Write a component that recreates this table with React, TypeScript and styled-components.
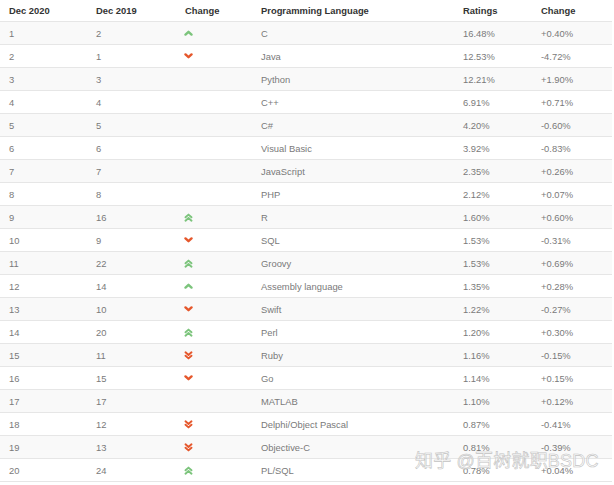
import React from 'react';
import styled, { createGlobalStyle } from 'styled-components';

type Trend = 'up' | 'up2' | 'down' | 'down2' | 'none';

interface Row {
  now: number;
  prev: number;
  trend: Trend;
  lang: string;
  rating: string;
  change: string;
}

const rows: Row[] = [
  { now: 1, prev: 2, trend: 'up', lang: 'C', rating: '16.48%', change: '+0.40%' },
  { now: 2, prev: 1, trend: 'down', lang: 'Java', rating: '12.53%', change: '-4.72%' },
  { now: 3, prev: 3, trend: 'none', lang: 'Python', rating: '12.21%', change: '+1.90%' },
  { now: 4, prev: 4, trend: 'none', lang: 'C++', rating: '6.91%', change: '+0.71%' },
  { now: 5, prev: 5, trend: 'none', lang: 'C#', rating: '4.20%', change: '-0.60%' },
  { now: 6, prev: 6, trend: 'none', lang: 'Visual Basic', rating: '3.92%', change: '-0.83%' },
  { now: 7, prev: 7, trend: 'none', lang: 'JavaScript', rating: '2.35%', change: '+0.26%' },
  { now: 8, prev: 8, trend: 'none', lang: 'PHP', rating: '2.12%', change: '+0.07%' },
  { now: 9, prev: 16, trend: 'up2', lang: 'R', rating: '1.60%', change: '+0.60%' },
  { now: 10, prev: 9, trend: 'down', lang: 'SQL', rating: '1.53%', change: '-0.31%' },
  { now: 11, prev: 22, trend: 'up2', lang: 'Groovy', rating: '1.53%', change: '+0.69%' },
  { now: 12, prev: 14, trend: 'up', lang: 'Assembly language', rating: '1.35%', change: '+0.28%' },
  { now: 13, prev: 10, trend: 'down', lang: 'Swift', rating: '1.22%', change: '-0.27%' },
  { now: 14, prev: 20, trend: 'up2', lang: 'Perl', rating: '1.20%', change: '+0.30%' },
  { now: 15, prev: 11, trend: 'down2', lang: 'Ruby', rating: '1.16%', change: '-0.15%' },
  { now: 16, prev: 15, trend: 'down', lang: 'Go', rating: '1.14%', change: '+0.15%' },
  { now: 17, prev: 17, trend: 'none', lang: 'MATLAB', rating: '1.10%', change: '+0.12%' },
  { now: 18, prev: 12, trend: 'down2', lang: 'Delphi/Object Pascal', rating: '0.87%', change: '-0.41%' },
  { now: 19, prev: 13, trend: 'down2', lang: 'Objective-C', rating: '0.81%', change: '-0.39%' },
  { now: 20, prev: 24, trend: 'up2', lang: 'PL/SQL', rating: '0.78%', change: '+0.04%' },
];

const GlobalStyle = createGlobalStyle`
  html, body {
    margin: 0;
    padding: 0;
    background: #fff;
  }
  body {
    font-family: "Liberation Sans", Arial, sans-serif;
  }
`;

const Page = styled.div`
  position: relative;
  width: 614px;
  height: 485px;
  overflow: hidden;
  background: #fff;
`;

const Table = styled.div`
  width: 612px;
`;

const RowGrid = styled.div<{ $striped?: boolean; $head?: boolean }>`
  display: grid;
  grid-template-columns: 87px 89px 76px 202px 78px 80px;
  align-items: center;
  height: ${(p) => (p.$head ? '21px' : '22px')};
  background: ${(p) => (p.$striped ? '#f9f9f9' : '#fff')};
  border-bottom: 1px solid #e6e6e6;
`;

const Cell = styled.div<{ $head?: boolean }>`
  padding-left: 9px;
  font-size: 9.4px;
  white-space: nowrap;
  color: ${(p) => (p.$head ? '#333' : '#7a7a7a')};
  font-weight: ${(p) => (p.$head ? 700 : 400)};
`;

const IconCell = styled.div`
  display: flex;
  align-items: center;
  padding-left: 8px;
`;

const Watermark = styled.div`
  position: absolute;
  left: 415px;
  top: 446px;
  font-family: "Liberation Sans", "Noto Sans CJK SC", sans-serif;
  font-size: 18px;
  color: rgba(255, 255, 255, 0.6);
  -webkit-text-stroke: 0.6px #c2c2c2;
  letter-spacing: 0.2px;
  white-space: nowrap;
`;

const GREEN = '#7cc47c';
const RED = '#e5572c';

function TrendIcon({ trend }: { trend: Trend }) {
  if (trend === 'none') return null;
  const up = trend === 'up' || trend === 'up2';
  const color = up ? GREEN : RED;
  const double = trend === 'up2' || trend === 'down2';
  if (!double) {
    return (
      <svg width="9" height="6" viewBox="0 0 9 6">
        <polyline
          points={up ? '1.5,4.6 4.5,1.8 7.5,4.6' : '1.5,1.4 4.5,4.2 7.5,1.4'}
          fill="none"
          stroke={color}
          strokeWidth="2.4"
          strokeLinecap="round"
          strokeLinejoin="round"
        />
      </svg>
    );
  }
  return (
    <svg width="9" height="9" viewBox="0 0 9 9">
      {(up ? ['1.5,4.3 4.5,1.6 7.5,4.3', '1.5,7.7 4.5,5 7.5,7.7'] : ['1.5,1.3 4.5,4 7.5,1.3', '1.5,4.7 4.5,7.4 7.5,4.7']).map((pts) => (
        <polyline
          key={pts}
          points={pts}
          fill="none"
          stroke={color}
          strokeWidth="1.9"
          strokeLinecap="round"
          strokeLinejoin="round"
        />
      ))}
    </svg>
  );
}

export default function App() {
  return (
    <Page>
      <GlobalStyle />
      <Table>
        <RowGrid $head>
          <Cell $head>Dec 2020</Cell>
          <Cell $head>Dec 2019</Cell>
          <Cell $head>Change</Cell>
          <Cell $head>Programming Language</Cell>
          <Cell $head>Ratings</Cell>
          <Cell $head>Change</Cell>
        </RowGrid>
        {rows.map((r) => (
          <RowGrid key={r.now} $striped={r.now % 2 === 1}>
            <Cell>{r.now}</Cell>
            <Cell>{r.prev}</Cell>
            <IconCell>
              <TrendIcon trend={r.trend} />
            </IconCell>
            <Cell>{r.lang}</Cell>
            <Cell>{r.rating}</Cell>
            <Cell>{r.change}</Cell>
          </RowGrid>
        ))}
      </Table>
      <Watermark>知乎 @百树就职BSDC</Watermark>
    </Page>
  );
}
